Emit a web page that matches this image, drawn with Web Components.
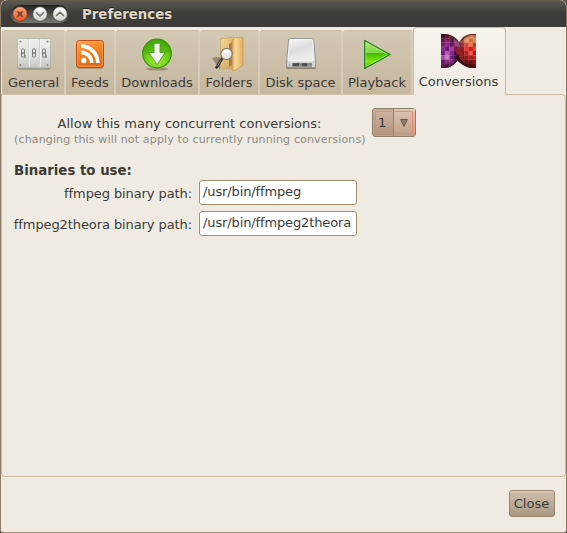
<!DOCTYPE html>
<html lang="en"><head><meta charset="utf-8"><title>Preferences</title>
<style>html,body{margin:0;width:567px;height:533px;overflow:hidden;background:#5f5544}body{font:13px/16px "DejaVu Sans",sans-serif;color:#3c3b37}</style></head>
<body>
<pref-window>
<title-bar slot="title">Preferences</title-bar>
<tab-strip slot="tabs">
<pref-tab style="width:63px" icon="general">General</pref-tab>
<pref-tab style="width:50px" icon="feeds">Feeds</pref-tab>
<pref-tab style="width:84px" icon="downloads">Downloads</pref-tab>
<pref-tab style="width:60px" icon="folders">Folders</pref-tab>
<pref-tab style="width:83px" icon="disk">Disk space</pref-tab>
<pref-tab style="width:70px" icon="play">Playback</pref-tab>
<pref-tab style="width:93px" icon="conversions" active>Conversions</pref-tab>
</tab-strip>
<conversion-panel></conversion-panel>
<push-button slot="footer">Close</push-button>
</pref-window>
<script>
const define=(name,html,setup)=>customElements.define(name,class extends HTMLElement{
 constructor(){super();this.attachShadow({mode:'open'}).innerHTML=html;}
 connectedCallback(){if(setup)setup(this,this.shadowRoot);}
});
const left=('5a1536 7d2848 a04a4c 7a2a3a 5a1c30 '+'6b1350 8c2160 7a1c58 9c3c70 8a3a62 '+'7a1a72 8e2688 6a1560 8b2f80 a85090 '+'8f2a92 6d1770 a33fa0 7c1f70 b06090 '+'7a1c80 b45cb8 8a2a88 5c1450 8c3060 '+'a050a0 c080c0 7a2078 5a1250 4a1030 '+'6c1868 8a2a86 a03a98 7a2070 3c0a28 '+'7c2468 6a1c5c 8a3078 4a1038 2c0818').split(' ');
const right=('6a2430 a85040 d88850 e89860 c87848 '+'8c3a58 c86848 f0a468 d86840 e08850 '+'a04468 b03a38 d84830 f07848 c03828 '+'7c1c28 a02020 e83830 c82020 e04438 '+'58101c 8c1818 b82020 f05848 b01c20 '+'400c14 701218 981818 a81c1c c42420 '+'380a10 601014 841418 7c1418 981818 '+'2c060c 4c0c10 681014 701214 801818').split(' ');
const mosaic=(x,a)=>a.map((c,i)=>`<rect x="${x+(i%5)*4.2}" y="${1+Math.floor(i/5)*4.25}" width="4.4" height="4.4" fill="#${c}"/>`).join('');
const toggle=(x,y)=>`<g fill="none" stroke="#74746f" stroke-width=".9"><rect x="${x}" y="${y}" width="3" height="8" rx=".6"/><path d="M${x} ${y+4}h3" stroke-width="1.4" stroke="#777"/></g>`;
const icons={
general:`<defs><linearGradient id="g" x2="0" y2="1"><stop stop-color="#eceeec"/><stop offset=".6" stop-color="#dfe1de"/><stop offset="1" stop-color="#c4c6c2"/></linearGradient></defs><rect x="1.5" y="3" width="33" height="30.5" rx="2" fill="#746955" opacity=".7"/><rect x="1.5" y="2.5" width="33" height="29.5" rx="1.5" fill="url(#g)" stroke="#b5b5ad" stroke-width=".8"/><path d="M12.5 3v28M23.5 3v28" stroke="#cfd1cd"/><path d="M13.5 3v28M24.5 3v28" stroke="#fff" opacity=".6"/>${toggle(5.5,13)}${toggle(16.5,13)}${toggle(26.5,13)}<path d="M9 19v3M30 19v3" stroke="#777" stroke-width="1.2"/><g fill="#888"><circle cx="4.5" cy="5.5" r="1"/><circle cx="31.5" cy="5.5" r="1"/><circle cx="4.5" cy="29" r="1"/><circle cx="31.5" cy="29" r="1"/></g>`,
feeds:`<defs><linearGradient id="g" x2=".3" y2="1"><stop stop-color="#f9a34c"/><stop offset=".5" stop-color="#f28321"/><stop offset="1" stop-color="#df6917"/></linearGradient></defs><rect x="4.5" y="5" width="27" height="28" rx="3" fill="#9e6c47" opacity=".5"/><rect x="4.5" y="4.5" width="27" height="27" rx="3" fill="url(#g)" stroke="#c54913"/><rect x="5.7" y="5.7" width="24.6" height="24.6" rx="2" fill="none" stroke="#ffb164" opacity=".7"/><circle cx="11.8" cy="24.5" r="2.7" fill="#fff"/><path d="M9 16.3A10.6 10.6 0 0 1 19.7 27M9 10.2A16.8 16.8 0 0 1 25.8 27" fill="none" stroke="#fff" stroke-width="3.7"/>`,
downloads:`<defs><radialGradient id="g" cx=".5" cy=".75" r=".65"><stop stop-color="#a4ec3b"/><stop offset=".7" stop-color="#63c912"/><stop offset="1" stop-color="#48a50b"/></radialGradient></defs><ellipse cx="18" cy="33" rx="11" ry="1.6" fill="#6e634f" opacity=".5"/><circle cx="18" cy="17.5" r="14.3" fill="url(#g)" stroke="#37930b" stroke-width="1.2"/><path d="M5 17a13 13 0 0 1 26 0q-8-3-13 0t-13 0" fill="#48ad09" opacity=".55"/><path d="M15 7.2h6v9.3h5.2L18 28.7 9.8 16.5H15z" fill="#f2f2ef" stroke="#3f970f" stroke-width=".8"/>`,
folders:`<defs><linearGradient id="g" x2="1" y2="1"><stop stop-color="#f7d994"/><stop offset="1" stop-color="#d0a15d"/></linearGradient><linearGradient id="h"><stop stop-color="#d5a260"/><stop offset=".3" stop-color="#f9d896"/><stop offset="1" stop-color="#e2ac61"/></linearGradient></defs><path d="M1 22q5-2 10 0l-2 12z" fill="#766a55" opacity=".65"/><path d="M9.5 3l13-2v32L9.5 32z" fill="url(#g)" stroke="#c69b5d" stroke-width=".6"/><path d="M18 8l6-4v23l-6 4z" fill="#a87d44"/><path d="M21 4l3-2 8-1v28l-9 6-2-1z" fill="url(#h)" stroke="#c69451" stroke-width=".7"/><path d="M11.5 22l-6 9.5" stroke="#333" stroke-width="2.6" stroke-linecap="round"/><path d="M10 24l-3.5 6" stroke="#999" stroke-width=".8"/><circle cx="15.5" cy="18" r="5.6" fill="#ecece8" fill-opacity=".95" stroke="#858580" stroke-width="1.2"/><path d="M12 17a4 4 0 0 1 7.5-1q-3 2-7.5 1" fill="#fff"/>`,
disk:`<defs><linearGradient id="g" x2=".3" y2="1"><stop stop-color="#f7f7f7"/><stop offset=".5" stop-color="#dddddf"/><stop offset="1" stop-color="#ededed"/></linearGradient></defs><rect x="3" y="30" width="30" height="3" rx="1.5" fill="#6c614e" opacity=".65"/><path d="M7.5 2.5Q5.8 2.5 5.6 4L3.6 25v5q0 1.5 1.5 1.5h26q1.5 0 1.5-1.5v-5l-2-21q-.1-1.5-1.7-1.5z" fill="#d2d2d1" stroke="#969696"/><path d="M8 3.5h20.5q1 0 1.2 1L31 23q0 2-2 2H7q-2 0-2-2L6.8 4.5q.1-1 1.2-1" fill="url(#g)" stroke="#fff" stroke-width=".7"/><rect x="9" y="27" width="20" height="3.6" fill="#88888c"/><path d="M10 27.3h6v3h-6zM19 27.3h5v3h-5z" fill="#4e4e53"/><circle cx="6.5" cy="29.3" r=".8" fill="#69a842"/>`,
play:`<defs><linearGradient id="g" x2="0" y2="1"><stop stop-color="#aaf16b"/><stop offset=".43" stop-color="#7ed348"/><stop offset=".45" stop-color="#43b900"/><stop offset=".75" stop-color="#79e60e"/><stop offset="1" stop-color="#43a70b"/></linearGradient></defs><path d="M5.7 4.5v28L31 18.5z" fill="url(#g)" stroke="#267d21" stroke-width="1.3" stroke-linejoin="round"/><path d="M7 6.6v23.8l21.6-11.9z" fill="none" stroke="#bcfa8b" stroke-width=".7" opacity=".8"/>`,
conversions:`<defs><clipPath id="a"><path d="M0 1h4q8 1 12 6 5 5 5 12 0 4-4 8-5 7-13 8H0z"/></clipPath><clipPath id="b"><path d="M35 1h-5q-8 1-11 7-4 5-3 13 1 6 5 10 4 3 9 4h5z"/></clipPath><radialGradient id="g"><stop offset=".55" stop-opacity="0"/><stop offset="1" stop-color="#180008" stop-opacity=".7"/></radialGradient></defs><g clip-path="url(#b)">${mosaic(15,right)}<ellipse cx="34" cy="16" rx="21" ry="22" fill="url(#g)"/></g><g clip-path="url(#a)">${mosaic(0,left)}<circle cx="1" cy="18" r="20" fill="url(#g)"/></g><path d="M13 6q6 3 6.5 9l-2 4-4-7z" fill="#b55a88" opacity=".7"/><path d="M14 13l4 1 4 6 1 10-6-6q-3-5-3-11" fill="#8e2024"/><path d="M17 21q2 8 8 12-7-2-10-8z" fill="#26060a"/><path d="M0 1.5h5q7 1 12 6M35 1.5h-5q-6 1-10 6M0 34.5h4q8-1 12-7M35 34.5h-5q-8-1-12-7" fill="none" stroke="#4a1826" stroke-width=".8"/>`
};
define('pref-window',`<style>
:host{display:flex;flex-direction:column;box-sizing:border-box;width:567px;height:533px;padding:0 1px 1px;background:linear-gradient(90deg,#8b7b67 0 1px,#efebe2 1px 566px,#867761 566px);border-radius:7px 7px 4px 4px;border-bottom:1px solid #a39070;overflow:hidden}
.foot{display:flex;justify-content:flex-end;padding:13px 11px 0 0}
</style><slot name="title"></slot><slot name="tabs"></slot><slot></slot><div class="foot"><slot name="footer"></slot></div>`);
define('title-bar',`<style>
:host{display:flex;align-items:center;box-sizing:border-box;height:27px;flex:none;padding:0 0 0 8px;background:linear-gradient(#645c4b 0 1px,#5a5850 1px,#3c3b37 14px);border-radius:6px 6px 0 0;color:#dfd8c8;font-weight:bold;font-size:13.33px}
svg{display:block;flex:none}.t{margin-left:13px;padding-top:2px;text-shadow:0 -1px #24231f;white-space:nowrap}
</style><svg width="60" height="25" viewBox="0 0 60 25"><defs><linearGradient id="p" x2="0" y2="1"><stop stop-color="#20201e"/><stop offset="1" stop-color="#797870"/></linearGradient><linearGradient id="o" x2="0" y2="1"><stop stop-color="#ffac82"/><stop offset="1" stop-color="#ee5420"/></linearGradient><linearGradient id="w" x2="0" y2="1"><stop stop-color="#fff"/><stop offset="1" stop-color="#d3d0c8"/></linearGradient></defs><rect x="1.5" y="4" width="58" height="18" rx="9" fill="url(#p)"/><circle cx="11" cy="13" r="7.2" fill="url(#o)" stroke="#6f3c2a" stroke-width=".6"/><circle cx="31" cy="13" r="7.2" fill="url(#w)" stroke="#4b4a45" stroke-width=".6"/><circle cx="51" cy="13" r="7.2" fill="url(#w)" stroke="#4b4a45" stroke-width=".6"/><path d="M8.3 10.3l5.4 5.4m0-5.4l-5.4 5.4" stroke="#65402f" stroke-width="1.6"/><path d="M27 11.3l4 3.7 4-3.7M47 15l4-3.7 4 3.7" fill="none" stroke="#6a6964" stroke-width="1.5"/></svg><span class="t"><slot></slot></span>`);
define('tab-strip',`<style>:host{display:flex;align-items:flex-end;height:68px;flex:none;padding-left:1px;position:relative;z-index:1}:host::before{content:"";width:1px;height:64px;background:#cabca5}</style><slot></slot>`);
define('pref-tab',`<style>
:host{display:flex;flex-direction:column;align-items:center;flex:none;box-sizing:border-box;height:65px;padding-top:5px;background:linear-gradient(#d3c8b4,#c5b79e);border-top:1px solid #cabca5;border-right:2px solid #d8cdbb;border-bottom:1px solid #d1c2a9;border-radius:3px 3px 0 0;white-space:nowrap}
:host([active]){height:68px;padding:5px 2px 0 0;background:linear-gradient(#f6f3ed,#efebe2);border:1px solid #cabca1;border-bottom:0;border-radius:4px 4px 0 0}
svg{display:block;flex:none}.label{margin-top:3px}:host([active]) .label{margin-top:5px}
</style><svg width="36" height="36" viewBox="0 0 36 36"></svg><span class="label"><slot></slot></span>`,(h,r)=>{r.querySelector('svg').innerHTML=icons[h.getAttribute('icon')];});
define('conversion-panel',`<style>
:host{display:block;box-sizing:border-box;height:383px;flex:none;margin-top:-1px;border:1px solid #cbbda4;border-radius:0 4px 4px 4px;padding:13px 0 0 12px}
.setting{display:flex;align-items:flex-start}.copy{width:351px;text-align:center;padding-top:8px;white-space:nowrap}.note{font-size:11px;line-height:16px;letter-spacing:.15px;color:#8b8983;text-align:left}
select-box{margin-left:7px}.h{font-weight:bold;font-size:13.33px;margin-top:15px}.rows{display:grid;grid-template-columns:178px 158px;gap:6px 7px;margin-top:1px;align-items:center}.name{display:flex;justify-content:flex-end;padding-top:2px;white-space:nowrap;letter-spacing:-.09px}
</style><div class="setting"><div class="copy"><div>Allow this many concurrent conversions:</div><div class="note">(changing this will not apply to currently running conversions)</div></div><select-box>1</select-box></div><div class="h">Binaries to use:</div><div class="rows"><span class="name">ffmpeg binary path:</span><path-field>/usr/bin/ffmpeg</path-field><span class="name">ffmpeg2theora binary path:</span><path-field>/usr/bin/ffmpeg2theora</path-field></div>`);
define('path-field',`<style>:host{display:flex;box-sizing:border-box;height:25px;border:1px solid #a09070;border-radius:3px;background:#fff;padding:3px 3px;white-space:nowrap;letter-spacing:-.12px}</style><slot></slot>`);
define('select-box',`<style>
:host{display:grid;grid-template-columns:21px 1fr;box-sizing:border-box;width:44px;height:29px;border:1px solid #8f806b;border-radius:3px;background:linear-gradient(#d2b5a2,#b2917a);box-shadow:inset 0 0 0 1px #b9a592;position:relative}
:host::after{content:"";position:absolute;grid-area:auto;inset:2px;border:1px solid #ef836e;border-radius:2px}.n{padding:6px 0 0 5px;box-sizing:border-box;border-right:1px solid #96806d}.a{display:flex;align-items:center;justify-content:center;background:linear-gradient(#dfc6b5,#bf9e88)}
svg{margin-right:2px}
</style><span class="n"><slot></slot></span><span class="a"><svg width="8" height="8"><path d="M.5.5h7L4 7.5z" fill="#8b7b6b" stroke="#625b50"/></svg></span>`);
define('push-button',`<style>:host{display:flex;align-items:center;justify-content:center;box-sizing:border-box;width:46px;height:27px;border:1px solid #95866f;border-radius:3px;background:linear-gradient(#cfc0ad,#a99780);box-shadow:inset 0 1px #d9ccba;padding-right:1px}</style><slot></slot>`);
</script></body></html>
